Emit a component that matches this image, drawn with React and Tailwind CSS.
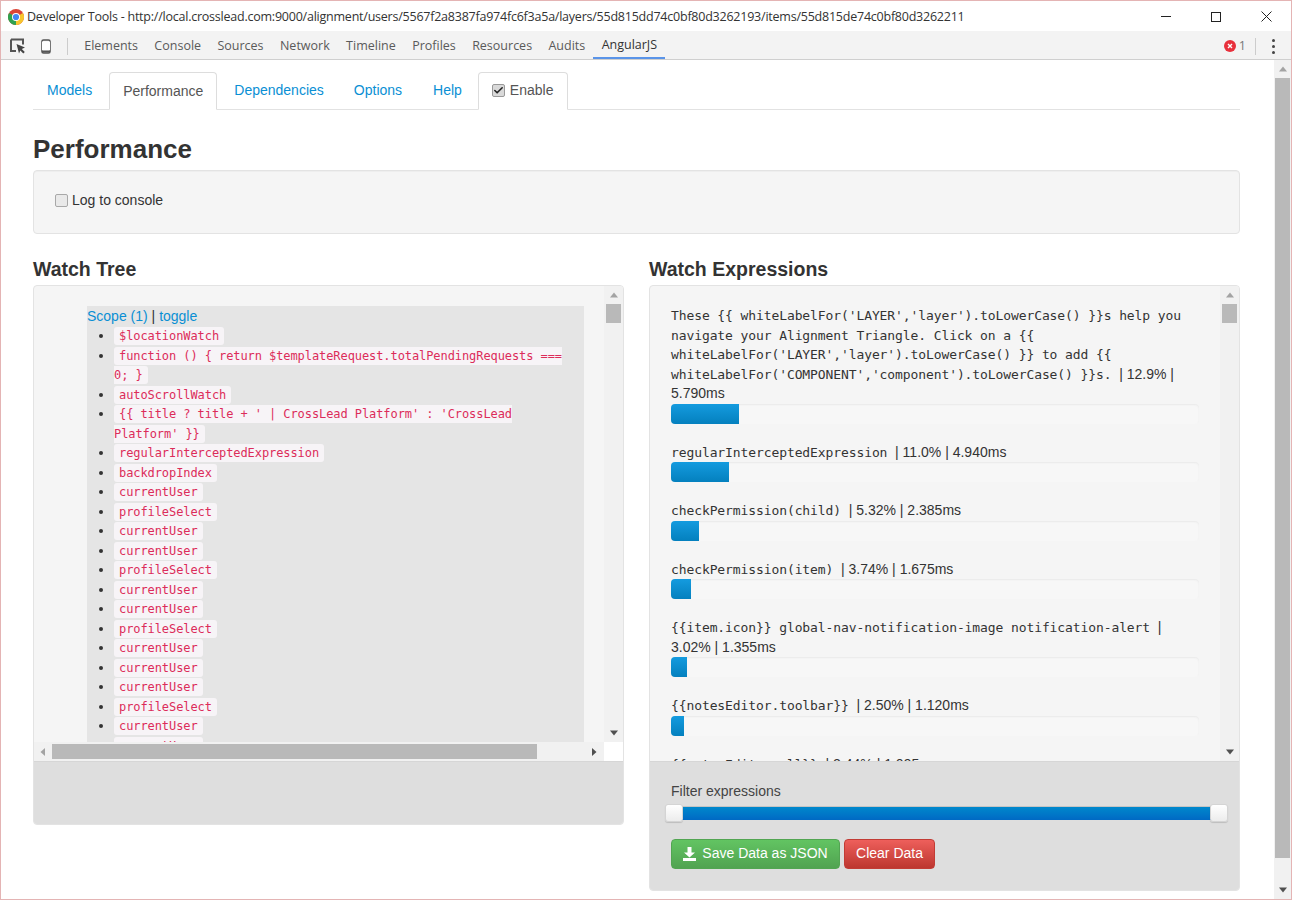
import { Check } from "lucide-react";

const devTabs = ["Elements", "Console", "Sources", "Network", "Timeline", "Profiles", "Resources", "Audits"];

const watches = [
  "$locationWatch",
  "function () { return $templateRequest.totalPendingRequests === 0; }",
  "autoScrollWatch",
  "{{ title ? title + ' | CrossLead Platform' : 'CrossLead Platform' }}",
  "regularInterceptedExpression",
  "backdropIndex",
  "currentUser",
  "profileSelect",
  "currentUser",
  "currentUser",
  "profileSelect",
  "currentUser",
  "currentUser",
  "profileSelect",
  "currentUser",
  "currentUser",
  "currentUser",
  "profileSelect",
  "currentUser",
  "currentUser",
];

const expressions = [
  {
    label: "These {{ whiteLabelFor('LAYER','layer').toLowerCase() }}s help you navigate your Alignment Triangle. Click on a {{ whiteLabelFor('LAYER','layer').toLowerCase() }} to add {{ whiteLabelFor('COMPONENT','component').toLowerCase() }}s.",
    stats: "| 12.9% | 5.790ms",
    width: 12.9,
  },
  { label: "regularInterceptedExpression", stats: "| 11.0% | 4.940ms", width: 11 },
  { label: "checkPermission(child)", stats: "| 5.32% | 2.385ms", width: 5.32 },
  { label: "checkPermission(item)", stats: "| 3.74% | 1.675ms", width: 3.74 },
  { label: "{{item.icon}} global-nav-notification-image notification-alert", stats: "| 3.02% | 1.355ms", width: 3.02 },
  { label: "{{notesEditor.toolbar}}", stats: "| 2.50% | 1.120ms", width: 2.5 },
  { label: "{{notesEditor.all}}", stats: "| 2.44% | 1.095ms", width: 2.44 },
];

const ChromeLogo = () => (
  <svg width="16" height="16" viewBox="0 0 16 16" className="shrink-0">
    <circle cx="8" cy="8" r="8" fill="#db4437" />
    <path d="M8 8 L1.07 4 A8 8 0 0 0 8 16 Z" fill="#2fa24f" />
    <path d="M8 8 L8 16 A8 8 0 0 0 14.93 4 Z" fill="#f7c52d" />
    <circle cx="8" cy="8" r="4" fill="#fff" />
    <circle cx="8" cy="8" r="3.1" fill="#4285f4" />
  </svg>
);

const Arrow = ({ dir = "up", color = "#6e6e6e" }) => {
  const points = {
    up: "4,1.5 8,6.5 0,6.5",
    down: "0,1.5 8,1.5 4,6.5",
    left: "6,0 6,8 1.5,4",
    right: "2,0 2,8 6.5,4",
  };
  return (
    <svg width="8" height="8" viewBox="0 0 8 8" className="shrink-0">
      <polygon points={points[dir]} fill={color} />
    </svg>
  );
};

const VScroll = ({ thumbClass }) => (
  <div className="w-[19px] shrink-0 bg-[#f1f1f1] flex flex-col items-center">
    <div className="h-[18px] flex items-center">
      <Arrow dir="up" color="#a3a3a3" />
    </div>
    <div className={`w-[15px] bg-[#b9b9b9] ${thumbClass}`} />
    <div className="flex-1" />
    <div className="h-[19px] flex items-center">
      <Arrow dir="down" color="#505050" />
    </div>
  </div>
);

const Code = ({ children }) => (
  <code className="bg-[#f7f4f7] text-[#dc2c5a] rounded-[3px] px-[5px] py-[2px] text-[12px] leading-[14px] tracking-[-0.08px] [font-family:'DejaVu_Sans_Mono',monospace]">
    {children}
  </code>
);

const ExpressionRow = ({ label, stats, width }) => (
  <div className="mb-[19px]">
    <div className="leading-[19.5px] text-[#333]">
      <span className="text-[13px] tracking-[-0.1px] [font-family:'DejaVu_Sans_Mono',monospace]">{label} </span>
      <span>{stats}</span>
    </div>
    <div className="h-[20px] w-[528px] rounded-[4px] bg-[#f7f7f7] shadow-[inset_0_1px_2px_rgba(0,0,0,0.06)] overflow-hidden">
      <div
        className="h-full bg-gradient-to-b from-[#149bdf] to-[#0480be]"
        style={{ width: `${width}%` }}
      />
    </div>
  </div>
);

const SliderHandle = () => (
  <div className="w-[18px] h-[18px] shrink-0 rounded-[3px] bg-gradient-to-b from-white to-[#ececec] border border-[#d4d4d4] shadow-[0_1px_1px_rgba(0,0,0,0.15)] relative z-10" />
);

export default function App() {
  return (
    <div className="w-[1292px] h-[900px] overflow-hidden flex flex-col bg-white border border-[#e4b4b4] text-[14px] text-[#333] [font-family:'Liberation_Sans',Arial,sans-serif]">
      {/* window title */}
      <div className="h-[30px] shrink-0 flex items-center pl-[7px] pt-[1px] bg-white">
        <ChromeLogo />
        <span className="ml-[3px] mt-[1px] text-[#333] text-[12.5px] tracking-[-0.23px] whitespace-nowrap [font-family:'Open_Sans',sans-serif]">
          Developer Tools - http://local.crosslead.com:9000/alignment/users/5567f2a8387fa974fc6f3a5a/layers/55d815dd74c0bf80d3262193/items/55d815de74c0bf80d3262211
        </span>
        <div className="ml-auto flex items-center">
          <div className="w-[50px] flex justify-center">
            <div className="w-[10px] h-[1px] bg-[#222]" />
          </div>
          <div className="w-[50px] flex justify-center">
            <div className="w-[10px] h-[10px] border border-[#222]" />
          </div>
          <div className="w-[50px] flex justify-center">
            <svg width="11" height="11" viewBox="0 0 11 11">
              <path d="M0.5 0.5 L10.5 10.5 M10.5 0.5 L0.5 10.5" stroke="#222" strokeWidth="1" />
            </svg>
          </div>
        </div>
      </div>

      {/* devtools toolbar */}
      <div className="h-[29px] shrink-0 flex items-center bg-[#f3f3f3] border-b border-[#cfcfcf] pl-[9px] pr-[13px] text-[12.5px] text-[#5a5a5a] [font-family:'Open_Sans',sans-serif]">
        <svg width="16" height="16" viewBox="0 0 16 16" className="shrink-0 mt-[2px]">
          <path d="M1 1.5h12v5M6 13H1V1.5" fill="none" stroke="#555" strokeWidth="2" />
          <path d="M6.5 6 L15 9.5 L11.8 11 L14.8 14 L13.3 15.5 L10.3 12.5 L9 15.5 Z" fill="#444" />
        </svg>
        <svg width="10" height="15" viewBox="0 0 10 15" className="ml-[15px] shrink-0 mt-[2px]">
          <rect x="1" y="1" width="8" height="13" rx="1.5" fill="none" stroke="#555" strokeWidth="1.6" />
          <rect x="1" y="2.5" width="8" height="9" fill="#fff" />
          <rect x="1" y="11.5" width="8" height="2" fill="#555" />
        </svg>
        <div className="w-[1px] h-[17px] mt-[2px] bg-[#ccc] ml-[16px] mr-[8px]" />
        {devTabs.map((t) => (
          <div key={t} className="px-[8.2px] h-full pt-[3px] flex items-center">
            {t}
          </div>
        ))}
        <div className="px-[8.2px] h-full pt-[3px] flex items-center border-b-2 border-[#5a94e8] text-[#333]">
          AngularJS
        </div>
        <div className="ml-auto flex items-center mt-[2px]">
          <div className="w-[12px] h-[12px] rounded-full bg-[#e8303c] flex items-center justify-center">
            <svg width="6" height="6" viewBox="0 0 6 6">
              <path d="M1 1 L5 5 M5 1 L1 5" stroke="#fff" strokeWidth="1.4" />
            </svg>
          </div>
          <span className="ml-[3px] text-[#777]">1</span>
          <div className="w-[1px] h-[17px] bg-[#ccc] ml-[9px] mr-[16px]" />
          <div className="flex flex-col gap-[3px] mr-[3px]">
            <div className="w-[3px] h-[3px] rounded-full bg-[#444]" />
            <div className="w-[3px] h-[3px] rounded-full bg-[#444]" />
            <div className="w-[3px] h-[3px] rounded-full bg-[#444]" />
          </div>
        </div>
      </div>

      {/* page */}
      <div className="flex-1 flex min-h-0">
        <div className="flex-1 min-w-0 pl-[32px] pr-[34px] pt-[12px]">
          {/* tabs */}
          <div className="flex h-[38px] gap-[2px] border-b border-[#e2e2e2] text-[#0a8fd4]">
            <div className="pl-[14px] pr-[15px] pt-[8px]">Models</div>
            <div className="px-[13px] pt-[8px] h-[38px] bg-white border border-[#ddd] border-b-white rounded-t-[4px] text-[#555]">
              Performance
            </div>
            <div className="pl-[15px] pr-[13px] pt-[8px]">Dependencies</div>
            <div className="px-[15px] pt-[8px]">Options</div>
            <div className="px-[14px] pt-[8px]">Help</div>
            <div className="pl-[13px] pr-[14px] pb-[2px] h-[38px] bg-white border border-[#ddd] border-b-white rounded-t-[4px] text-[#555] flex items-center gap-[5px]">
              <div className="w-[13px] h-[13px] rounded-[2px] bg-[#d9d9d9] border border-[#999] flex items-center justify-center">
                <Check size={11} strokeWidth={3.5} color="#222" />
              </div>
              Enable
            </div>
          </div>

          <h1 className="mt-[23px] text-[26px] leading-[32px] font-bold text-[#333]">Performance</h1>

          <div className="mt-[5px] h-[64px] rounded-[4px] border border-[#e3e3e3] bg-[#f5f5f5] flex items-center pl-[21px] pb-[4px] gap-[4px] shadow-[inset_0_1px_1px_rgba(0,0,0,0.03)]">
            <div className="w-[13px] h-[13px] rounded-[2px] bg-[#e9e9e9] border border-[#a8a8a8]" />
            Log to console
          </div>

          <div className="mt-[24px] grid grid-cols-[591px_591px] gap-x-[25px] items-start">
            {/* watch tree */}
            <div>
              <h2 className="text-[19.5px] leading-[22px] font-bold mb-[5px]">Watch Tree</h2>
              <div className="h-[540px] rounded-[4px] border border-[#e3e3e3] bg-[#f5f5f5] overflow-hidden flex flex-col">
                <div className="h-[456px] shrink-0 flex">
                  <div className="flex-1 min-w-0 pl-[53px] pr-[20px] pt-[20px] overflow-hidden">
                    <div className="bg-[#e5e5e5] h-full overflow-hidden leading-[19.5px]">
                      <div className="leading-[20px]">
                        <span className="text-[#0a8fd4]">Scope (1)</span> | <span className="text-[#0a8fd4]">toggle</span>
                      </div>
                      <ul className="list-disc pl-[27px] pr-[10px]">
                        {watches.map((w, i) => (
                          <li key={i}>
                            <Code>{w}</Code>
                          </li>
                        ))}
                      </ul>
                    </div>
                  </div>
                  <VScroll thumbClass="h-[19px]" />
                </div>
                <div className="h-[19px] shrink-0 flex">
                  <div className="flex-1 bg-[#f1f1f1] flex items-center pl-[5px] pr-[6px]">
                    <Arrow dir="left" color="#a3a3a3" />
                    <div className="ml-[5px] w-[485px] h-[15px] bg-[#b9b9b9]" />
                    <div className="flex-1" />
                    <Arrow dir="right" color="#505050" />
                  </div>
                  <div className="w-[19px] bg-white" />
                </div>
                <div className="flex-1 bg-[#dedede] border-t border-[#d6d6d6]" />
              </div>
            </div>

            {/* watch expressions */}
            <div>
              <h2 className="text-[19.5px] leading-[22px] font-bold mb-[5px]">Watch Expressions</h2>
              <div className="h-[606px] rounded-[4px] border border-[#e3e3e3] bg-[#f5f5f5] overflow-hidden flex flex-col">
                <div className="h-[475px] shrink-0 flex">
                  <div className="flex-1 min-w-0 pl-[21px] pr-[21px] pt-[20px] overflow-hidden">
                    {expressions.map((e) => (
                      <ExpressionRow key={e.stats} {...e} />
                    ))}
                  </div>
                  <VScroll thumbClass="h-[19px]" />
                </div>
                <div className="flex-1 bg-[#dedede] border-t border-[#d6d6d6] pl-[21px] pt-[20px]">
                  <div className="leading-[19.5px] text-[#444]">Filter expressions</div>
                  <div className="mt-[2px] ml-[-6px] w-[563px] flex items-center">
                    <SliderHandle />
                    <div className="flex-1 h-[14px] mx-[-2px] bg-gradient-to-b from-[#0088cc] to-[#0069c4] border-t border-[#c4c4c4]" />
                    <SliderHandle />
                  </div>
                  <div className="mt-[17px] flex gap-[4px]">
                    <div className="h-[30px] w-[169px] rounded-[4px] bg-gradient-to-b from-[#62c462] to-[#51a351] border border-[#52a552] text-white flex items-center justify-center gap-[6px]">
                      <svg width="13" height="14" viewBox="0 0 13 14">
                        <path d="M4.5 0h4v5.5H12L6.5 10.5 1 5.5h3.5z" fill="#fff" />
                        <path d="M0 11h13v3H0z" fill="#fff" />
                      </svg>
                      Save Data as JSON
                    </div>
                    <div className="h-[30px] w-[91px] rounded-[4px] bg-gradient-to-b from-[#ee5f5b] to-[#bd362f] border border-[#c23c35] text-white flex items-center justify-center">
                      Clear Data
                    </div>
                  </div>
                </div>
              </div>
            </div>
          </div>
        </div>

        {/* page scrollbar */}
        <div className="w-[17px] shrink-0 bg-[#f1f1f1] flex flex-col items-center">
          <div className="h-[18px] flex items-center">
            <Arrow dir="up" color="#a3a3a3" />
          </div>
          <div className="w-[15px] h-[780px] bg-[#b9b9b9]" />
          <div className="flex-1" />
          <div className="h-[18px] flex items-center">
            <Arrow dir="down" color="#505050" />
          </div>
        </div>
      </div>
    </div>
  );
}
